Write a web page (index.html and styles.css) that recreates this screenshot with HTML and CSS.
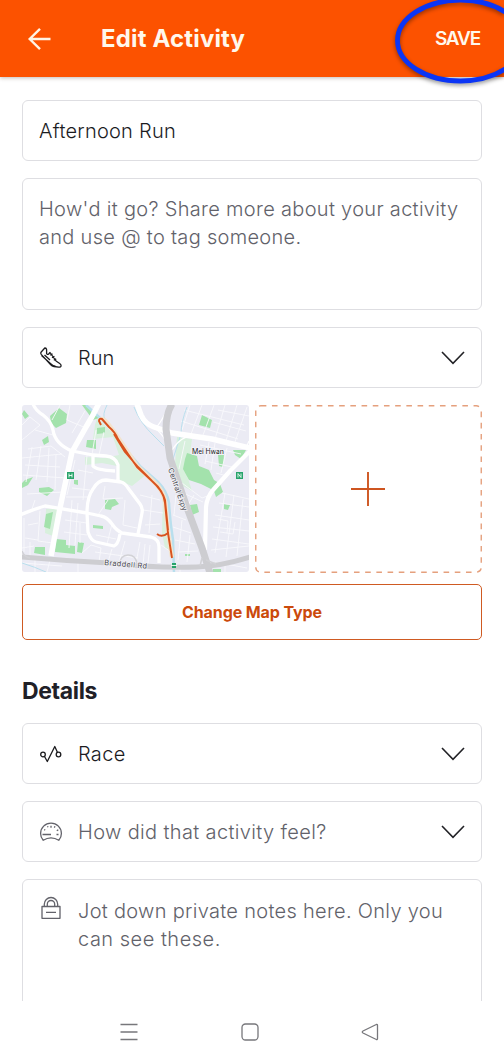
FILE: index.html
```html
<!DOCTYPE html>
<html lang="en">
<head>
<meta charset="utf-8">
<title>Edit Activity</title>
<link rel="stylesheet" href="styles.css">
</head>
<body>
<div class="screen">
  <header class="bar">
    <svg class="back" width="24" height="24" viewBox="0 0 24 24"><path d="M23.500 12H2.500M13 1.800 2.700 12 13 22.200"/></svg>
    <h1 class="title">Edit Activity</h1>
    <span class="save">SAVE</span>
    <svg class="ring" width="124" height="96" viewBox="380 0 124 96"><ellipse cx="460.500" cy="40.500" rx="63" ry="40.500"/></svg>
  </header>
  <main class="form">
    <div class="field"><span class="t-name">Afternoon Run</span></div>
    <div class="field area muted"><p><span class="t-d1">How'd it go? Share more about your activity</span><br><span class="t-d2">and use @ to tag someone.</span></p></div>
    <div class="field row">
      <svg class="icon" width="24" height="24" viewBox="0 0 24 24"><path d="M5.800 2 2.200 6q-1 1.200 0 2.400L11.500 18.500q1.500 1.600 3.500 2l4.500.7q2.500.2 2.600-1.500 0-1.300-1.400-2.200l-3.700-2.500-6-8.500-1.500 1.700q-1.300.8-1.900-.8V3.600q-.3-1.800-1.800-1.600ZM2.500 9.500l9.500 8.500q2 2 4.500 2.200M5.500 9l5.500 5M11.200 9.200l2.300-1.500M13 11.800l2.400-1.500M14.800 14.300l2.400-1.400"/></svg>
      <span class="grow t-run">Run</span>
      <svg class="chev" width="26" height="16" viewBox="0 0 26 16"><path d="M2 2l11 11.300L24 2"/></svg>
    </div>
    <div class="media">
      <svg class="map" width="227" height="167" viewBox="22 405 227 167">
        <rect x="22" y="405" width="227" height="167" fill="#ebebf4"/>
        <g fill="#d8f0dd">
          <path d="M97 418l16 15 14 23 20 18-15 12-12-5 -3-15-15-3-17 2v-8l18 1 16-3-6-18-20 2 2-14ZM163 490l4 30 3 30-5-2-3-15Z"/>
          <path d="M177 437l15 2-2 15-6 12 8 25-9-5-8-22ZM46 509l12-1-5 28-8-3Z"/>
        </g>
        <g fill="#a3e2ac">
          <path d="m50 416 9-8 8 6-1 9-10 5-5-5ZM24 410l5 6-4 3-3-5ZM42 440l6-4 1 6-5 3ZM97 428l8-1v6l-8 1ZM87 440l9 0v9l-10-2ZM25 480l8-3-5 8-6 3v-5ZM39 488l10-1 5 3-7 6-8-4ZM56 539l10 1 0 5 9 1v8l-20-2ZM35 547h10v8l-11-2ZM78 542l6 1-2 10-5-1ZM105 500l10-1 4 5-7 3-1 3-6-1ZM93 525l10 1v3l-10-1ZM74 480h4v5l-4-1ZM46 514l7-2-3 17-6-2ZM82 405h5l12 13-6 2Z"/>
          <path d="m202 415 10 5-2 8-11-3ZM187 453l10 3 2 10 10 4 5 10 5 3-6 7-12-6-12-4-6-11 2-10ZM218 455l6 0-1 12-4-1ZM233 450h13l-5 9-6-4ZM213 488l7-4 3 8-7 5ZM190 505l7-1 2 8-7 3ZM224 504l6 1-2 5-4-1ZM185 554h5v2h-5ZM213 569h8v3h-8Z"/>
        </g>
        <g class="lanes">
          <path d="M22 425l8-8 10 8-18 15M35 430l18 5M28 449l23-3 14 11M22 458l40-4M25 465l35 2M23 475l43 3M32 447l-6 35M41 446l-5 34M49 448l-2 34M56 454l-1 36M60 405l-8 15M70 405l-3 15 19 8M72 433l13-22M27 494l36-2M35 500l-4 12M40 511l-2 30 15 2M24 518v34M28 525l10-2M25 538l13 2M22 548l12-2M30 542v14"/>
          <path d="M75 460l-8 35M87 455l-4 45M96 430l-4 25M104 432l-5 23M78 470l15 3M72 488l18 2M66 497l22 0M72 500l-3 48M78 503l-3 42M65 520l22 3M64 532l23 3M80 523v20M105 486l-2 13 20-1M108 500l-10 15M125 500l-2 25 14 3M112 524l-5 20M96 535l20 4M101 548l-2 14M112 549l-4 13M125 541l-6 21M140 542l-4 21M95 552l43 6M82 553l9-8 10 3M145 544l-2 21M22 563l40 3M50 560l-3 12M78 560v12M35 558v14M140 495l20 5M143 510l20 3M145 525l15-1M152 495l-3 38"/>
          <path d="M184 410l60 15M181 421l57 18M190 405l-8 25M202 405l-11 29M214 405l-12 33M225 405l-10 34M237 405l-12 39M247 407l-12 35M218 410l31 6M213 422l33 9M185 441l-6 28M200 445l41 9M209 442l-4 22M215 443l-4 27M227 448l-6 25M205 461l27 6M216 473l11 3M181 492l22 10M182 483l20 15 8-3M194 495l-6 10"/>
          <path d="M222 493l27 6M219 503l30 4M215 515l34 5M213 527l36 4M212 539l37 5M211 550l38-4M225 493l-10 60M234 495l-8 62M243 499l-6 57M218 519l10 2-1 12M235 522l-2 12-13-2M173 515l13 5M173 527l18 6M175 540l20 4M178 552l20-1M182 520l-4 40M190 535l-3 27M176 495l-2 20M150 545l-2 18M161 545l10 7M215 562l32 6M225 565v7M180 565v7"/>
        </g>
        <g class="river">
          <path d="M86 405l13 12 15 14 14 21 13 15 17 15q9 9 11 21 1 18 4 37l1 33"/>
          <path class="thin" d="M22 563q13 4 24 9M107 405q-5 10-2 14M134 407q6 16 20 29l10 10M187 407q-6 15-6 27l-8 25"/>
        </g>
        <g class="streets">
          <path class="wide" d="M99 403Q94 414 86 427L72 452 60 508 51 556"/>
          <path d="M33 404q3 7 10 11 8 6 10 15 2 14 19 21l21 4 13 1q10 1 12 9v15M93 455v11q3 4 22 5M20 515q14-6 25-9l42 7 14 3q6 1 11 8 4 6 10 9l29 4q8 2 8 10v16M87 513q0-16 6-24 5-9 13-9l15 2q4 1 7 6l12 16q3 4 2 9l-4 21M87 513l1 19q3 9 8 10l18 4q4-1 6-12"/>
          <path class="wide" d="M137 404l4 11q4 9 13 12l18 6 40 6q20 5 38 9"/>
          <path class="edge" d="M251 450l-21 21-17 19q-6 7-7 17l-1 43"/>
          <path class="fine" d="M154 428q7 4 11 12M167 410q-8 16-12 18M196 436q-14-2-24 14M246 448l3-7"/>
        </g>
        <path class="artery" d="M21 557q45 4 88 6 40 5 88 4 24-1 53-10"/>
        <path class="artery big" d="M172 404q-6 10-6 25l4 29 16 47 16 43 8 25"/>
        <path class="ramp" d="M119 566q1-11 9-11t9 9M22 551q2 6 8 7M202 558l-2 8M206 560l10 4"/>
        <path class="route-edge" d="M100 420q3-3 8 4l7 9 22 33 16 15q11 10 12 21l3 31 4 24"/>
        <path class="route" d="M101 425l-2-4q0-3 3-2l7 8q6 5 9 12l10 15 9 13 15 14q12 10 13 22l3 30 4 25M114 434l11 18 13 15 14 14q10 9 13 19l3 30M168 533q-6 5-11 1"/>
        <g class="stations"><rect x="67" y="472" width="7" height="7"/><rect x="236" y="472" width="7" height="7"/><path d="M172 563h4v5h-4z"/></g>
        <path class="marks" d="M69 473.500v4M72 473.500v4M69 475.500h3M238 477.500v-4l3 4v-4M171 565.500h6"/>
        <text class="place" x="192" y="454" textLength="32">Mei Hwan</text>
        <text class="road" x="104" y="565" textLength="43" transform="rotate(5 104 565)">Braddell Rd</text>
        <text class="road" x="168" y="469" textLength="45" transform="rotate(71 168 469)">Central Expy</text>
      </svg>
      <div class="add">
        <svg class="dash" width="227" height="168" viewBox="0 0 227 168"><rect x=".75" y=".75" width="225.500" height="166.500" rx="5"/></svg>
        <svg class="plus" width="34" height="34" viewBox="0 0 34 34"><path d="M17 0v34M0 17h34"/></svg>
      </div>
    </div>
    <div class="button"><span class="t-btn">Change Map Type</span></div>
    <h2 class="section"><span class="t-det">Details</span></h2>
    <div class="field row">
      <svg class="icon" width="24" height="24" viewBox="0 0 24 24"><circle cx="4" cy="12.500" r="2.300"/><circle cx="19.500" cy="12.500" r="2.300"/><path d="M5.500 14.500 8.300 19.500 15.800 4.500 18.500 10.500"/></svg>
      <span class="grow t-race">Race</span>
      <svg class="chev" width="26" height="16" viewBox="0 0 26 16"><path d="M2 2l11 11.300L24 2"/></svg>
    </div>
    <div class="field row muted">
      <svg class="icon" width="24" height="24" viewBox="0 0 24 24"><path d="M4.200 20.300C2.500 18.500 1.600 16 1.600 13.500a10.400 10.400 0 0 1 20.800 0c0 2.500-.9 5-2.600 6.800-5-3.100-10.600-3.100-15.600 0ZM3.500 14.500h8.500M5.200 9.500l1 .6M8.500 6.300l.5 1M12 5.800v2M16 6.300l-.7 1.300M19.300 9.700l-1.500 1M17.500 14.500h2"/></svg>
      <span class="grow t-feel">How did that activity feel?</span>
      <svg class="chev" width="26" height="16" viewBox="0 0 26 16"><path d="M2 2l11 11.300L24 2"/></svg>
    </div>
    <div class="field row notes muted">
      <svg class="icon lock" width="24" height="24" viewBox="0 0 24 24"><path d="M3 10.500h18v11.800H3ZM5.300 10.500V8.200a6.700 6.700 0 0 1 13.400 0v2.300M8.300 10.500V8.200a3.700 3.700 0 0 1 7.400 0v2.300M7 16.300h10"/></svg>
      <p><span class="t-n1">Jot down private notes here. Only you</span><br><span class="t-n2">can see these.</span></p>
    </div>
  </main>
  <nav class="nav">
    <svg width="18" height="18" viewBox="0 0 18 18"><path d="M.5 1.500h17M.5 9h17M.5 16.500h17"/></svg>
    <svg width="18" height="18" viewBox="0 0 18 18"><rect x="1" y="1" width="16" height="16" rx="3.500"/></svg>
    <svg width="18" height="18" viewBox="0 0 18 18"><path d="M15.300 1.500 2 8q-1.500 1 0 2l13.300 6.500q1.200.3 1.200-1v-13q0-1.300-1.200-1Z"/></svg>
  </nav>
</div>
</body>
</html>
```
FILE: styles.css
```css
* { box-sizing: border-box; }
body { margin: 0; background: #fff; font-family: Inter, "Liberation Sans", sans-serif; }
h1, h2, p { margin: 0; }
svg { display: block; flex: none; fill: none; }
.screen { width: 504px; height: 1064px; display: flex; flex-direction: column; overflow: hidden; }
.bar { position: relative; flex: none; height: 77px; padding: 0 24px 0 27px; display: flex; align-items: center; background: #fc5200; color: #fff8ec; box-shadow: 0 1px 4px rgba(60, 30, 20, .3); }
.back { stroke: #fff3e4; stroke-width: 2.400; }
.title { margin-left: 50px; font-size: 24px; line-height: 30px; font-weight: 700; letter-spacing: .16px; }
.save { margin-left: auto; font-size: 19px; font-weight: 600; letter-spacing: -1.200px; }
.ring { position: absolute; right: 0; top: 0; filter: drop-shadow(0 2px 2px rgba(0, 0, 0, .4)); }
.ring ellipse { stroke: #0b35f5; stroke-width: 4.800; }
.form { flex: none; height: 924px; padding: 23px 22px 0; display: flex; flex-direction: column; gap: 17px; overflow: hidden; }
.field { flex: none; height: 61px; padding: 0 16px; border: 1.500px solid #dedee2; border-radius: 6px; display: flex; align-items: center; font-size: 20px; line-height: 28px; font-weight: 350; color: #1c1c1f; white-space: nowrap; }
.area { height: 132px; padding-top: 16px; align-items: flex-start; }
.muted { color: #62626a; }
.t-name { letter-spacing: .24px; }
.t-d1 { letter-spacing: .31px; }
.t-d2 { letter-spacing: .3px; }
.t-feel { letter-spacing: .36px; }
.t-n1 { letter-spacing: .3px; }
.t-n2 { letter-spacing: .5px; }
.t-btn { letter-spacing: -.1px; }
.t-det { letter-spacing: -.35px; }
.t-race { letter-spacing: .3px; }
.row .icon { margin-right: 15px; stroke: currentColor; stroke-width: 1.300; stroke-linejoin: round; }
.row .lock { margin-top: -1px; }
.grow { flex: 1; }
.chev { margin-right: -1px; stroke: #222226; stroke-width: 1.600; }
.media { flex: none; height: 168px; display: flex; justify-content: space-between; }
.map { border-radius: 3px; }
.lanes { stroke: #f8f8fc; stroke-width: .9; }
.river { stroke: #b9dfed; stroke-width: 2.500; }
.river .thin { stroke-width: 1; }
.streets { stroke: #fff; stroke-width: 3.300; stroke-linejoin: round; }
.streets .wide { stroke-width: 5.500; }
.streets .edge { stroke-width: 4.200; }
.streets .fine { stroke-width: 1.200; }
.artery { stroke: #cdcdd1; stroke-width: 5; }
.artery.big { stroke-width: 7; }
.ramp { stroke: #d2d2d6; stroke-width: 1.500; }
.route-edge { stroke: #f3e3cd; stroke-width: 4.500; }
.route { stroke: #d9531e; stroke-width: 1.900; stroke-linejoin: round; }
.stations { fill: #28a36b; }
.marks { stroke: #f1fff6; stroke-width: .9; }
.map text { font-size: 7.500px; stroke: #f3f3f8; stroke-width: 1.500px; paint-order: stroke; }
.map .place { fill: #17171a; font-size: 7px; }
.map .road { fill: #4e4e55; }
.add { position: relative; width: 227px; display: flex; align-items: center; justify-content: center; }
.dash { position: absolute; inset: 0; stroke: #e5a07d; stroke-width: 1.400; stroke-dasharray: 5.600 5.600; }
.plus { margin-right: 1px; stroke: #ce5520; stroke-width: 1.900; }
.button { flex: none; height: 56px; margin-top: -6px; border: 1.500px solid #cf5a22; border-radius: 5px; display: flex; align-items: center; justify-content: center; color: #cb4a0c; font-size: 16px; font-weight: 700; }
.section { flex: none; height: 32px; margin: 17px 0 0; line-height: 34px; font-size: 23px; font-weight: 700; color: #202027; }
.notes { height: 180px; padding-top: 17px; align-items: flex-start; }
.nav { flex: 1; padding: 0 125px 2px 120px; display: flex; align-items: center; justify-content: space-between; background: #fff; stroke: #77777b; stroke-width: 1.300; }
```
